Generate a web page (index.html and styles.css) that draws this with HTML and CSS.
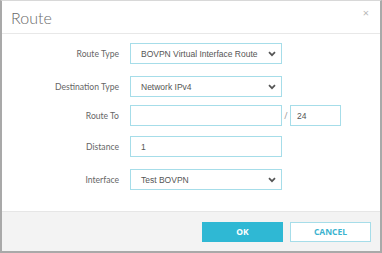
FILE: index.html
```html
<!DOCTYPE html>
<html lang="en">
    <head>
        <meta charset="UTF-8" />
        <title>Route</title>
        <link rel="stylesheet" href="styles.css">
    </head>
    <body>
        <div class="dialog">
            <div class="dialog-header">
                <h1 class="dialog-title">Route</h1>
                <span class="close">&times;</span>
            </div>
            <div class="dialog-body">
                <div class="row row-type">
                    <label class="lbl">Route Type</label>
                    <div class="field select">
                        <span>BOVPN Virtual Interface Route</span>
                        <svg class="caret" width="8" height="6" viewBox="0 0 8 6"><path d="M1 1.2l3 3 3-3" fill="none" stroke="#555" stroke-width="1.7"/></svg>
                    </div>
                </div>
                <div class="row row-dest">
                    <label class="lbl">Destination Type</label>
                    <div class="field select">
                        <span>Network IPv4</span>
                        <svg class="caret" width="8" height="6" viewBox="0 0 8 6"><path d="M1 1.2l3 3 3-3" fill="none" stroke="#555" stroke-width="1.7"/></svg>
                    </div>
                </div>
                <div class="row row-to">
                    <label class="lbl">Route To</label>
                    <div class="field"></div>
                    <span class="slash">/</span>
                    <div class="field mask">24</div>
                </div>
                <div class="row row-dist">
                    <label class="lbl">Distance</label>
                    <div class="field">1</div>
                </div>
                <div class="row row-if">
                    <label class="lbl">Interface</label>
                    <div class="field select">
                        <span>Test BOVPN</span>
                        <svg class="caret" width="8" height="6" viewBox="0 0 8 6"><path d="M1 1.2l3 3 3-3" fill="none" stroke="#555" stroke-width="1.7"/></svg>
                    </div>
                </div>
            </div>
            <div class="dialog-footer">
                <button class="btn btn-ok">OK</button>
                <button class="btn btn-cancel">CANCEL</button>
            </div>
        </div>
    </body>
</html>
```

FILE: styles.css
```css
body {
    margin: 0;
    font-family: 'Open Sans', 'Liberation Sans', sans-serif;
}

.dialog {
    width: 382px;
    height: 253px;
    box-sizing: border-box;
    border: 2px solid #a9a9a9;
    border-top: 1px solid #d8d8d8;
    background: #fff;
    display: flex;
    flex-direction: column;
}

.dialog-header {
    height: 32px;
    border-bottom: 1px solid #e8e8e8;
    display: flex;
    align-items: center;
    justify-content: space-between;
    padding: 0 11px 0 9px;
}

.dialog-title {
    margin: 0;
    font-family: Lato, 'Open Sans', sans-serif;
    font-weight: 300;
    font-size: 16px;
    color: #6a6a6a;
}

.close {
    color: #b8b8b8;
    font-size: 11px;
    margin-top: -9px;
}

.dialog-body {
    flex: 1;
    padding-top: 9px;
}

.row {
    display: flex;
    align-items: center;
    height: 21px;
}

.row-dest { margin-top: 12px; }
.row-to { margin-top: 8px; }
.row-dist { margin-top: 10px; }
.row-if { margin-top: 12px; }

.lbl {
    width: 117px;
    text-align: right;
    margin-right: 11px;
    font-family: Lato, 'Open Sans', sans-serif;
    font-size: 8.6px;
    color: #666;
}

.field {
    width: 152px;
    height: 21px;
    box-sizing: border-box;
    border: 1px solid #a6dde9;
    padding: 0 5px 0 10px;
    display: flex;
    align-items: center;
    justify-content: space-between;
    font-family: 'Liberation Sans', sans-serif;
    font-size: 8.5px;
    color: #555;
}

.slash {
    width: 8px;
    text-align: center;
    font-size: 9px;
    color: #999;
}

.field.mask {
    width: 51px;
    padding: 0 6px;
}

.dialog-footer {
    height: 39px;
    border-top: 1px solid #e6e6e6;
    background: #f3f3f3;
    display: flex;
    align-items: center;
    justify-content: flex-end;
    gap: 7px;
    padding: 0 9px 0 0;
}

.btn {
    width: 81px;
    height: 20px;
    box-sizing: border-box;
    font-family: 'Open Sans', sans-serif;
    font-weight: 700;
    font-size: 8.5px;
    cursor: pointer;
}

.btn-ok {
    background: #2fb8d4;
    border: 1px solid #2fb8d4;
    color: #fff;
}

.btn-cancel {
    background: #fff;
    border: 1px solid #a6dde9;
    color: #3bb3cf;
}
```
